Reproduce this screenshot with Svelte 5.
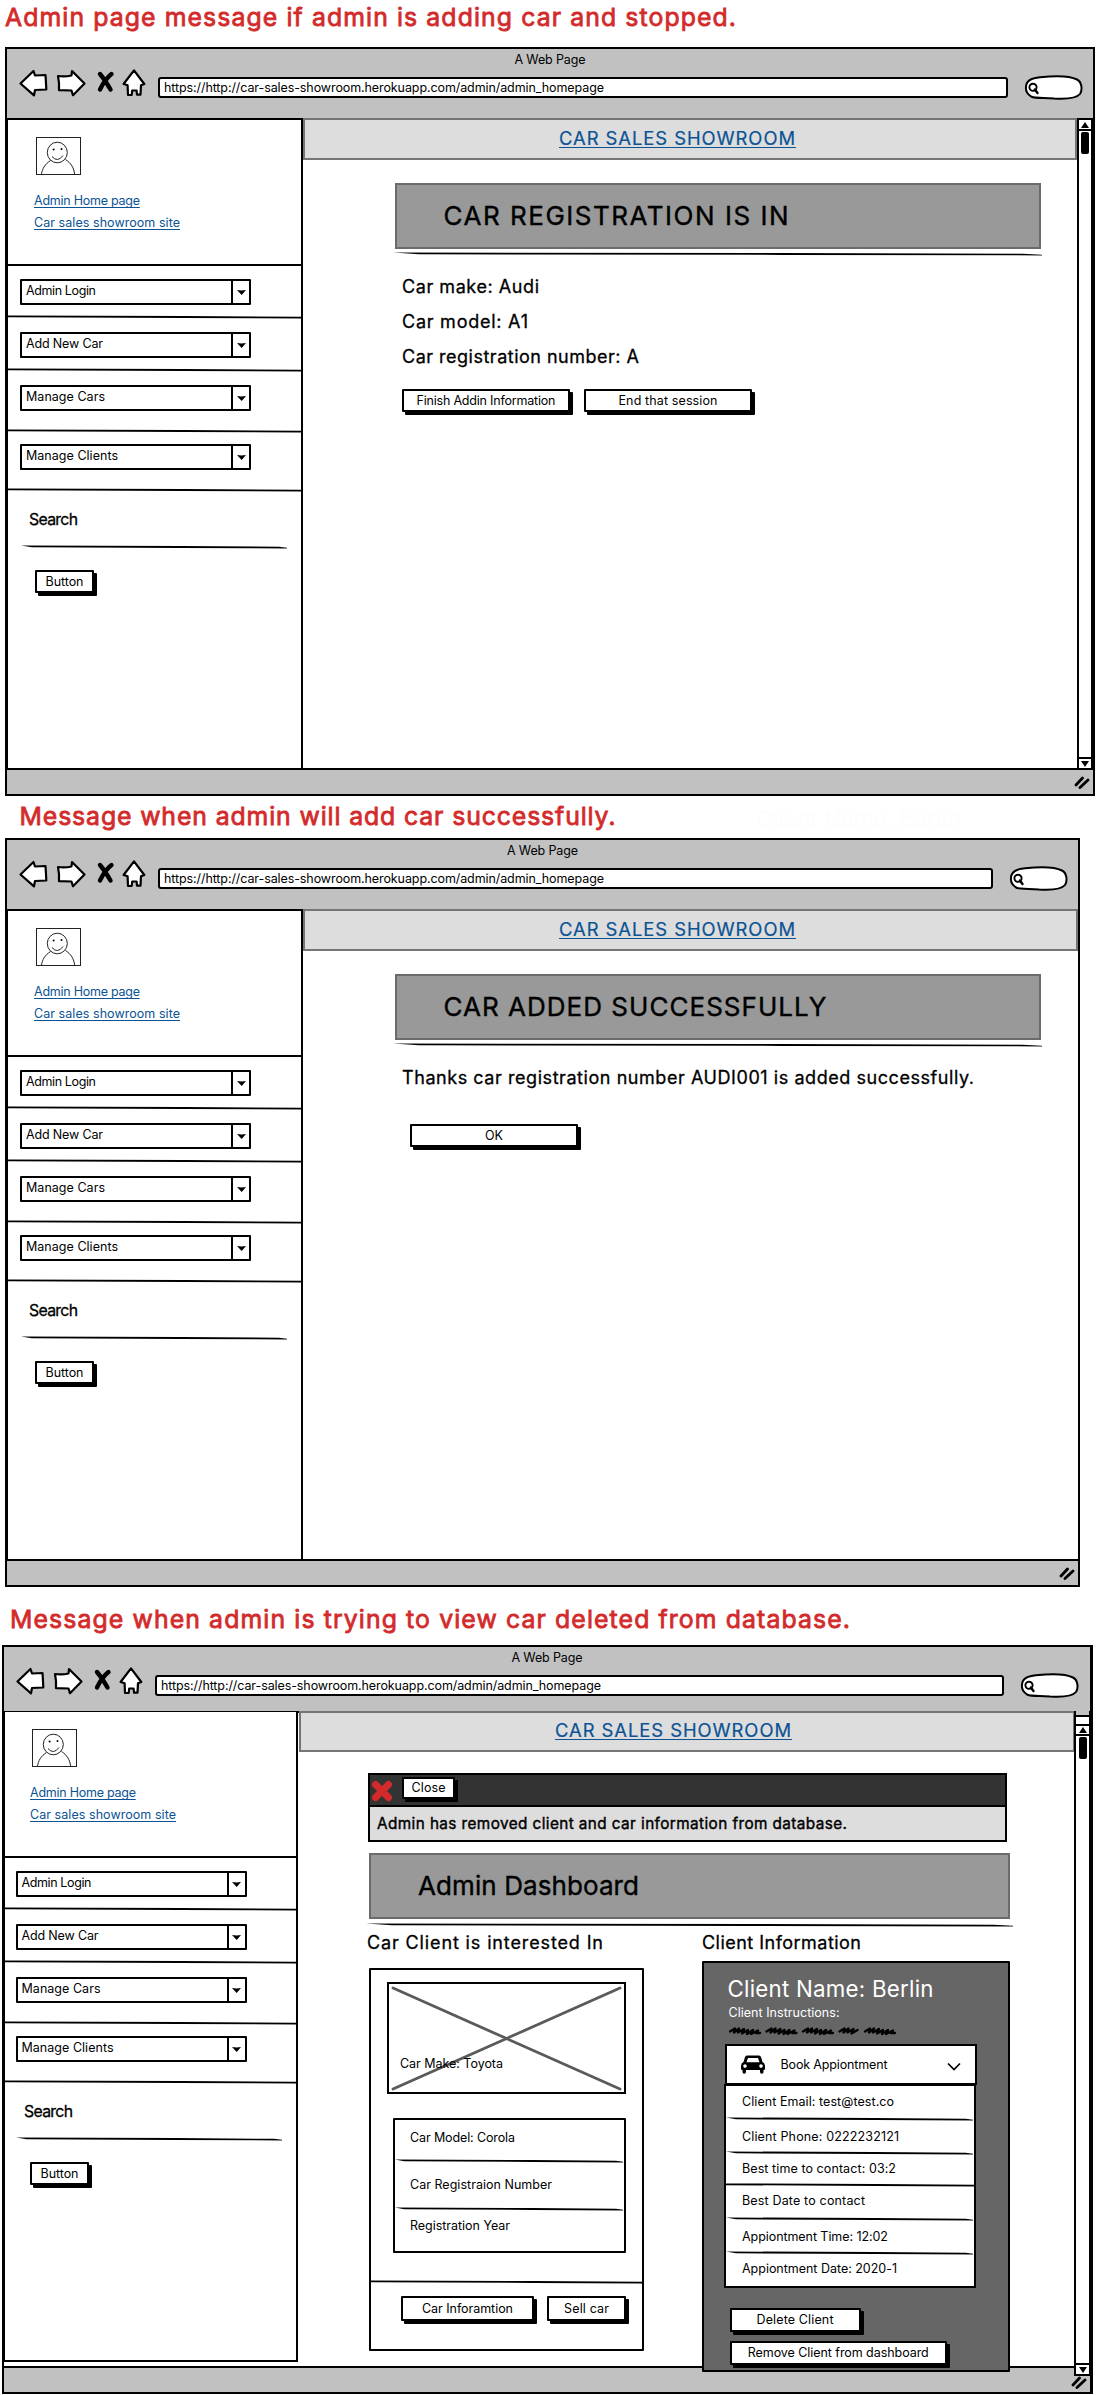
<script>
  const url = 'https://http://car-sales-showroom.herokuapp.com/admin/admin_homepage';

  const menu = [
    { label: 'Admin Login', width: 70, row: 'r1' },
    { label: 'Add New Car', width: 77, row: 'r2' },
    { label: 'Manage Cars', width: 79, row: 'r3' },
    { label: 'Manage Clients', width: 92, row: 'r4' }
  ];

  const clientRows = [
    { label: 'Client Email: test@test.co', width: 152, row: 'c1' },
    { label: 'Client Phone: 0222232121', width: 157, row: 'c2' },
    { label: 'Best time to contact: 03:2', width: 154, row: 'c3' },
    { label: 'Best Date to contact', width: 123, row: 'c4' },
    { label: 'Appiontment Time: 12:02', width: 146, row: 'c5' },
    { label: 'Appiontment Date: 2020-1', width: 155, row: 'c6' }
  ];

  // Spreads the letters of a label so that it takes up the given width.
  function fit(node, width) {
    const natural = node.getBoundingClientRect().width;
    const gaps = Math.max(node.textContent.length - 1, 1);
    const step = (width - natural) / gaps;
    node.style.letterSpacing = `${step}px`;
    node.style.marginRight = `${-step}px`;
  }
</script>

{#snippet text(value, width)}<span class="t" use:fit={width}>{value}</span>{/snippet}

{#snippet rule(full)}
  <svg class="rule" viewBox="0 0 100 4" preserveAspectRatio="none" aria-hidden="true">
    {#if full}
      <path d="M0 .4 L60 1 L100 1.8 L100 3.4 L60 2.9 L0 2.2 Z" />
    {:else}
      <path d="M0 .5 L60 1 L97 1.8 L100 2.7 L100 3.4 L60 2.9 L4 2.3 Z" />
    {/if}
  </svg>
{/snippet}

{#snippet button(label, width, cls)}
  <button class="btn {cls}">{@render text(label, width)}</button>
{/snippet}

{#snippet toolbar()}
  <div class="toolbar">
    <div class="wtitle">{@render text('A Web Page', 71)}</div>
    <div class="nav">
      <svg class="navicons" viewBox="18 68 130 32" aria-hidden="true">
        <g fill="#fff" stroke="#000" stroke-width="2.2" stroke-linejoin="round">
          <path d="M20.5 83.5 33.5 71 35 75.5 45.5 75Q46 82 46.3 89.5L35 90 34 95.3Z" />
          <path d="M58 76Q65 77 71.5 75.5L72 71 84.5 83.5 73 95.3 71.5 90.5 59 90.2Q59.5 83 58 76Z" />
          <path d="M134 70.3 144.3 84 141 85.3 140.5 94.6H137L136.6 90.5H132.2L131.7 95H128L127.6 85.2 123.6 84Z" />
        </g>
        <path d="M100 74Q105 80 110.5 89.5M111.5 74Q105 79 100 89.5" fill="none" stroke="#000" stroke-width="4.4" stroke-linecap="round" />
      </svg>
      <div class="url">{@render text(url, 440)}</div>
      <svg class="search" viewBox="0 0 59 25" aria-hidden="true">
        <path d="M2 12C2 5 8 3 16 2.3 30 .8 46 1 53 4.5 58 7 58.6 15 56 19 52 24 40 24 30 23.4 20 22.5 12 24 7 21.5 3 19 1.5 16 2 12Z" fill="#fff" stroke="#000" stroke-width="2" />
        <circle cx="9" cy="12.3" r="3.6" fill="none" stroke="#000" stroke-width="1.9" />
        <path d="M10.8 14.5 13.5 18" stroke="#000" stroke-width="2.4" stroke-linecap="round" />
      </svg>
    </div>
  </div>
{/snippet}

{#snippet sidebar()}
  <aside>
    <div class="profile">
      <svg class="avatar" viewBox="0 0 45 38" aria-hidden="true">
        <g fill="none" stroke="#222" stroke-width="1">
          <rect x=".5" y=".5" width="44" height="37" />
          <ellipse cx="21.3" cy="15.5" rx="10" ry="10.3" />
          <path d="M16 19.5Q21.5 26 27 18.5M14.5 23.5C9 27 6 32 5.5 37.5M29.5 22.5C35 26 38 31 38.7 37.5" />
        </g>
        <circle cx="17.6" cy="12.5" r="1" /><circle cx="25.5" cy="12" r="1" />
      </svg>
      <a href="#home">{@render text('Admin Home page', 106)}</a>
      <a href="#site">{@render text('Car sales showroom site', 146)}</a>
    </div>
    {#each menu as item}
      <div class="row {item.row}">
        <div class="select">
          <span class="value">{@render text(item.label, item.width)}</span>
          <span class="drop"><svg viewBox="0 0 9 5" aria-hidden="true"><path d="M0 0Q4.5 .8 9 0L4.7 5Z" /></svg></span>
        </div>
        {@render rule(true)}
      </div>
    {/each}
    <div class="find">
      <div class="label">{@render text('Search', 49)}</div>
      {@render rule(false)}
      {@render button('Button', 38, 'small')}
    </div>
  </aside>
{/snippet}

{#snippet site()}
  <header><a href="#top">{@render text('CAR SALES SHOWROOM', 236)}</a></header>
{/snippet}

{#snippet scrollbar()}
  <div class="scroll">
    <span class="cap up"><svg viewBox="0 0 8 6" aria-hidden="true"><path d="M4 0 8 6H0Z" /></svg></span>
    <span class="thumb"></span>
    <span class="cap down"><svg viewBox="0 0 8 6" aria-hidden="true"><path d="M0 0H8L4 6Z" /></svg></span>
  </div>
{/snippet}

{#snippet footer()}
  <footer>
    <svg viewBox="0 0 16 13" aria-hidden="true">
      <path d="M2 9 8.5 2M6 11.5 14 4" stroke="#000" stroke-width="2.8" stroke-linecap="round" />
    </svg>
  </footer>
{/snippet}

<div class="page">
  <h2 class="h1">{@render text('Admin page message if admin is adding car and stopped.', 731)}</h2>
  <section class="window w1">
    {@render toolbar()}
    <div class="body">
      {@render sidebar()}
      <main>
        {@render site()}
        <div class="banner">{@render text('CAR REGISTRATION IS IN', 345)}</div>
        {@render rule(false)}
        <div class="details">
          <p>{@render text('Car make: Audi', 137)}</p>
          <p>{@render text('Car model: A1', 126)}</p>
          <p>{@render text('Car registration number: A', 237)}</p>
          <div class="actions">
            {@render button('Finish Addin Information', 139, 'wide')}
            {@render button('End that session', 99, 'wide')}
          </div>
        </div>
      </main>
      {@render scrollbar()}
    </div>
    {@render footer()}
  </section>

  <h2 class="h2">
    {@render text('Message when admin will add car successfully.', 596)}
    <span class="faint">{@render text('Client Name: Berlin', 204)}</span>
  </h2>
  <section class="window w2">
    {@render toolbar()}
    <div class="body">
      {@render sidebar()}
      <main>
        {@render site()}
        <div class="banner">{@render text('CAR ADDED SUCCESSFULLY', 383)}</div>
        {@render rule(false)}
        <div class="details">
          <p>{@render text('Thanks car registration number AUDI001 is added successfully.', 572)}</p>
          {@render button('OK', 18, 'wide ok')}
        </div>
      </main>
    </div>
    {@render footer()}
  </section>

  <h2 class="h3">{@render text('Message when admin is trying to view car deleted from database.', 840)}</h2>
  <section class="window w3">
    {@render toolbar()}
    <div class="body">
      {@render sidebar()}
      <main>
        {@render site()}
        <div class="alert">
          <div class="bar">
            <svg viewBox="0 0 22 22" aria-hidden="true"><path d="M4.5 4.5 17.5 17.5M17.5 4.5 4.5 17.5" stroke="#d32b2b" stroke-width="7" stroke-linecap="round" /></svg>
            {@render button('Close', 34, 'close')}
          </div>
          <div class="note">{@render text('Admin has removed client and car information from database.', 470)}</div>
        </div>
        <div class="banner">{@render text('Admin Dashboard', 221)}</div>
        {@render rule(false)}
        <div class="columns">
          <div class="col">
            <h3>{@render text('Car Client is interested In', 236)}</h3>
            <div class="card">
              <div class="photo">
                <svg viewBox="0 0 235 108" preserveAspectRatio="none" aria-hidden="true"><path d="M4 4 231 105M231 4 4 105" stroke="#5a5a5a" stroke-width="2.8" stroke-linecap="round" /></svg>
                <span class="caption">{@render text('Car Make: Toyota', 103)}</span>
              </div>
              <div class="specs">
                <div class="s1">{@render text('Car Model: Corola', 105)}</div>
                {@render rule(false)}
                <div class="s2">{@render text('Car Registraion Number', 142)}</div>
                {@render rule(false)}
                <div class="s3">{@render text('Registration Year', 100)}</div>
              </div>
              {@render rule(true)}
              <div class="actions">
                {@render button('Car Inforamtion', 91, 'info')}
                {@render button('Sell car', 45, 'sell')}
              </div>
            </div>
          </div>
          <div class="col">
            <h3>{@render text('Client Information', 159)}</h3>
            <div class="panel">
              <div class="name">{@render text('Client Name: Berlin', 206)}</div>
              <div class="instr">{@render text('Client Instructions:', 111)}</div>
              <svg class="scribble" viewBox="0 0 168 10" aria-hidden="true">
                <g fill="none" stroke="#000" stroke-width="2.3" stroke-linecap="round" stroke-linejoin="round">
                  {#each [[0, 31], [36.5, 31], [73, 31], [109.5, 20], [135, 31]] as [x, w]}
                    <path d="M{x + 1} 5.5L{x + 6} 2.5 {x + 5} 6.5 {x + 10} 2.5 {x + 9} 6.5 {x + 15} 3 {x + 13} 7.5 {x + 19} 4{w > 25 ? ` ${x + 18} 8 ${x + 24} 4 ${x + 22} 8 ${x + 29} 4.5 ${x + 27} 7 ${x + 31} 7` : ''}" />
                  {/each}
                </g>
              </svg>
              <div class="book">
                <svg class="car" viewBox="0 0 24 19" aria-hidden="true">
                  <path fill-rule="evenodd" d="M6 .5H18Q19.5 .5 20 2L21.5 7Q24 8 24 11V14Q24 15 22.5 15V17Q22.5 18.8 20.8 18.8 19 18.8 19 17V15H5V17Q5 18.8 3.2 18.8 1.5 18.8 1.5 17V15Q0 15 0 14V11Q0 8 2.5 7L4 2Q4.5 .5 6 .5ZM7 3 5.5 7.3H18.5L17 3ZM4 9.3A1.8 1.8 0 1 0 4 12.9 1.8 1.8 0 1 0 4 9.3ZM20 9.3A1.8 1.8 0 1 0 20 12.9 1.8 1.8 0 1 0 20 9.3Z" />
                </svg>
                {@render text('Book Appiontment', 107)}
                <svg class="chev" viewBox="0 0 14 9" aria-hidden="true"><path d="M1 1.5 7 7.5 13 1.5" fill="none" stroke="#000" stroke-width="1.7" /></svg>
              </div>
              <div class="client">
                {#each clientRows as item}
                  <div class="crow {item.row}">
                    {@render text(item.label, item.width)}
                    {#if item.row !== 'c6'}{@render rule(item.row === 'c3')}{/if}
                  </div>
                {/each}
              </div>
              {@render button('Delete Client', 77, 'delete')}
              {@render button('Remove Client from dashboard', 181, 'remove')}
            </div>
          </div>
        </div>
      </main>
      {@render scrollbar()}
    </div>
    {@render footer()}
  </section>
</div>

<style>
  :global(body) { margin: 0; background: #fff; }
  .page {
    width: 1096px; height: 2395px; overflow: hidden;
    font: 12.5px/17px Inter, "Liberation Sans", sans-serif;
    color: #000;
  }
  .page :global(*) { box-sizing: border-box; }
  svg { display: block; flex: none; }
  p, h2, h3 { margin: 0; }
  .t { white-space: nowrap; display: inline-block; }
  .rule { width: 100%; height: 4px; }
  a { color: #0b5394; text-decoration: none; }

  h2 { color: #d32b2b; font-size: 24.8px; line-height: 30px; font-weight: 400; -webkit-text-stroke: .8px #d32b2b; display: flex; }
  .h1 { height: 47px; padding: 1.6px 0 0 5px; }
  .h2 { height: 42px; padding: 5px 0 0 19.5px; }
  .h3 { height: 58px; padding: 16.6px 0 0 10px; }
  .faint { color: #fdfdfd; font-size: 23px; margin: 3px 0 0 141px; -webkit-text-stroke: 0; }

  .window {
    height: 749px; border: 2px solid #000; background: #fff;
    display: flex; flex-direction: column;
  }
  .w1 { width: 1090px; margin-left: 5px; }
  .w2 { width: 1075px; margin-left: 5px; }
  .w3 { width: 1091px; margin-left: 2px; border-right-width: 3px; }

  .toolbar { height: 71px; background: #c1c1c1; border-bottom: 2px solid #000; padding-top: 1.5px; flex: none; }
  .w3 .toolbar { height: 66px; }
  .wtitle { text-align: center; }
  .nav { display: flex; height: 32px; margin-top: .5px; padding: 0 10px 0 11px; align-items: flex-start; }
  .navicons { width: 130px; height: 32px; }
  .url {
    flex: 1; height: 21px; margin: 8.5px 16px 0 10px; padding-left: 4px;
    border: 2px solid #000; border-radius: 3px; background: #fff; line-height: 17px;
  }
  .search { width: 59px; height: 25px; margin-top: 6.5px; }
  .w3 .nav { padding-right: 11px; }

  .body { display: flex; flex: none; height: 648px; }
  .w3 .body { height: 653px; }

  aside { width: 296px; flex: none; border-left: 1px solid #000; border-right: 2px solid #000; }
  .w3 aside { height: 650px; margin: -1px 1px 0 -2px; border-left-width: 3px; border-bottom: 2px solid #000; background: #fff; }
  .profile { height: 146px; border-bottom: 2px solid #000; padding: 17px 0 0 26px; }
  .w3 .profile { padding-left: 25px; }
  .avatar { width: 45px; height: 38px; margin: 0 0 14.5px 2px; }
  .profile a { display: block; line-height: 22px; }
  .profile a .t, header a .t { line-height: 1.2; text-decoration: underline; text-decoration-thickness: 1px; text-underline-offset: 2px; text-decoration-skip-ink: none; }
  .row { display: flex; flex-direction: column; justify-content: space-between; }
  .r1 { height: 52px; padding: 13px 0 0; }
  .r2 { height: 53px; padding: 14px 0 0; }
  .r3 { height: 61px; padding: 14px 0 0; }
  .r4 { height: 59px; padding: 12px 0 0; }
  .row .rule { margin-bottom: -1px; }
  .select { display: flex; width: 231px; height: 26px; margin-left: 12px; border: 2px solid #000; border-radius: 1px; }
  .w3 .select { margin-left: 10.5px; }
  .value { flex: 1; padding-left: 4px; line-height: 19px; }
  .drop { width: 18px; border-left: 2px solid #000; display: grid; place-items: center; }
  .drop svg { width: 9px; height: 5px; }
  .find { padding: 19px 0 0 13px; }
  .w3 .find { padding-left: 11px; }
  .find .label { font-size: 15.8px; line-height: 20px; padding-left: 8px; -webkit-text-stroke: .3px #000; }
  .find .rule { width: 266px; margin-top: 15px; }

  .btn {
    display: block; font: inherit; line-height: 17px; color: #000; background: #fff;
    border: 2px solid #000; border-radius: 1px; box-shadow: 3px 3px 0 #000;
    height: 22.5px; padding: 0; text-align: center; flex: none;
  }
  .small { width: 59px; margin: 21px 0 0 14px; }
  .wide { width: 168px; height: 23px; }

  main { flex: 1; min-width: 0; position: relative; }
  header {
    height: 42px; margin: -2px 0 0; background: #ddd; border: 2px solid #757575;
    display: flex; align-items: center; padding: 0 0 2px 254px; font-size: 18.4px;
  }
  header a { -webkit-text-stroke: .2px #0b5394; }
  .w3 header { height: 41px; margin-right: -1px; position: relative; }
  .banner {
    width: 646px; height: 66px; margin: 22.5px 0 0 91.5px; padding: 1px 0 0 47px;
    background: #999; border: 2px solid #6b6b6b; display: flex; align-items: center;
    font-size: 26px; line-height: 32px; -webkit-text-stroke: .4px #000;
  }
  main > .rule { width: 649px; margin: 3px 0 0 90px; }
  .details { padding: 19.500px 0 0 99px; }
  .details p { font-size: 18px; line-height: 24px; margin-bottom: 11px; -webkit-text-stroke: .3px #000; }
  .actions { display: flex; }
  .details .actions { gap: 14px; padding-top: 9px; }
  .ok { margin: 34px 0 0 8px; }

  .scroll { width: 16px; flex: none; border-left: 2px solid #000; border-right: 2px solid #000; display: flex; flex-direction: column; align-items: center; }
  .w3 .scroll {
    padding-top: 13px; margin: -2px 0 -10px; z-index: 1; border-right-width: 1px;
    background: linear-gradient(#c1c1c1 4px, #000 4px, #000 6px, #fff 6px);
  }
  .cap { width: 12px; height: 11px; background: #fff; display: grid; place-items: center; flex: none; }
  .cap svg { width: 8px; height: 6px; }
  .up { border-bottom: 2px solid #000; }
  .w3 .up { border-top: 2px solid #000; height: 12px; width: 13px; }
  .down { border-top: 2px solid #000; margin-top: auto; }
  .w3 .down { border-bottom: 2px solid #000; height: 13px; width: 13px; }
  .thumb { width: 8px; height: 22px; border-radius: 2px; background: #000; margin-top: 1px; flex: none; }

  footer { height: 26px; flex: none; background: #c1c1c1; border-top: 2px solid #000; display: flex; justify-content: flex-end; align-items: center; padding-right: 3px; }
  .w3 footer { padding-top: 5px; }
  footer svg { width: 16px; height: 13px; }

  .alert { width: 639px; height: 69.5px; margin: 20.5px 0 0 69px; border: 2px solid #000; background: #ddd; }
  .bar { height: 32px; background: #333; border-bottom: 2px solid #000; display: flex; padding: 2px 0 0 1px; gap: 9px; }
  .bar svg { width: 22px; height: 22px; margin-top: 3px; }
  .close { width: 53px; line-height: 16px; }
  .note { font-size: 15.3px; line-height: 33px; padding-left: 7px; -webkit-text-stroke: .4px #000; }
  .w3 .banner { width: 641px; margin: 10.5px 0 0 70px; }
  .w3 main > .rule { width: 647px; margin: 4.5px 0 0 67px; }

  .columns { display: flex; padding: 4px 0 0 68px; }
  .col:first-child { width: 335px; }
  h3 { font-size: 18px; line-height: 24px; font-weight: 400; -webkit-text-stroke: .3px #000; }
  .card { width: 275px; height: 382.5px; margin: 13px 0 0 2px; border: 2px solid #000; border-radius: 1px; }
  .photo { width: 239px; height: 112px; margin: 12px 0 0 16px; border: 2px solid #000; display: grid; }
  .photo > * { grid-area: 1 / 1; }
  .photo svg { width: 235px; height: 108px; }
  .caption { align-self: end; padding: 0 0 20px 11px; }
  .specs { width: 233px; height: 135px; margin: 24px 0 27px 22px; border: 2px solid #000; border-radius: 1px; }
  .specs .rule { width: 228px; }
  .specs > div { padding-left: 15px; }
  .s1 { height: 39px; padding-top: 9px; }
  .s2 { height: 44px; padding-top: 13px; }
  .s3 { padding-top: 6px; }
  .card .actions { padding: 12px 0 0 30px; gap: 13px; }
  .info, .sell { height: 25px; }
  .info { width: 133px; }
  .sell { width: 79px; }

  .panel { width: 308px; height: 411px; margin-top: 6px; background: #666; border: 2px solid #000; border-radius: 1px; padding-left: 20.5px; position: relative; z-index: 1; }
  .name { color: #fff; font-size: 22.3px; line-height: 28px; padding: 12px 0 0 3px; }
  .instr { color: #fff; padding: 1px 0 0 4px; }
  .scribble { width: 168px; height: 10px; margin: 5px 0 0 4px; }
  .book { width: 252px; height: 41px; margin: 8px 0 0; background: #fff; border: 2px solid #000; display: flex; align-items: center; padding: 0 14px; }
  .car { width: 24px; height: 19px; margin-right: 16px; }
  .book .t { margin-top: -1px; }
  .chev { width: 14px; height: 9px; margin-left: auto; margin-top: 3px; }
  .client { width: 252.5px; height: 204px; margin: -1px 0 20px -1px; background: #fff; border: 2px solid #000; }
  .crow { display: flex; flex-direction: column; justify-content: space-between; align-items: flex-start; }
  .crow .t { margin-left: 16.5px; }
  .crow .rule { width: 247px; margin-bottom: -2px; }
  .crow.c3 .rule { width: 249px; }
  .c1 { height: 33px; padding-top: 7px; }
  .c2 { height: 34px; padding-top: 9px; }
  .c3 { height: 32px; padding-top: 7px; }
  .c4 { height: 33.5px; padding-top: 7px; }
  .c5 { height: 34px; padding-top: 9px; }
  .c6 { height: 33px; padding-top: 7px; }
  .delete { width: 131px; height: 23.5px; margin: 0 0 9.5px 5px; }
  .remove { width: 217.5px; height: 23.5px; margin-left: 5px; }
</style>
